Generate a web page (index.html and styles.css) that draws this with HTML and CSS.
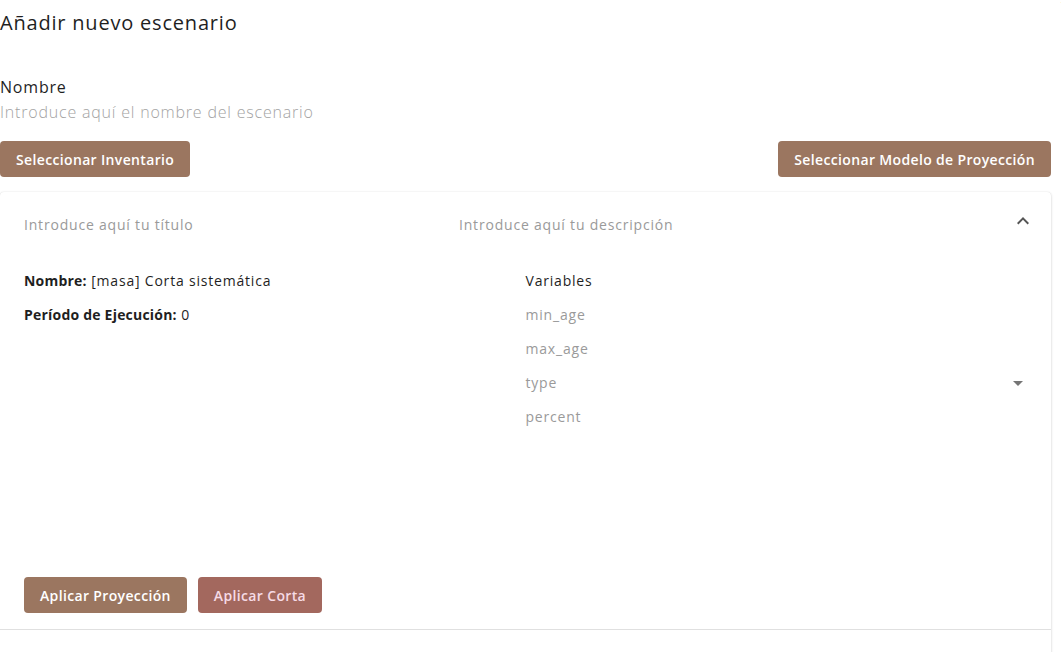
FILE: index.html
```html
<!DOCTYPE html>
<html lang="es">
<head>
<meta charset="utf-8">
<title>Añadir nuevo escenario</title>
<link rel="stylesheet" href="styles.css">
</head>
<body>
<div class="dialog">
  <span class="close">x</span>
  <h2 class="title">Añadir nuevo escenario</h2>
  <div class="field">
    <label class="label">Nombre</label>
    <div class="input">Introduce aquí el nombre del escenario</div>
  </div>
  <div class="actions">
    <button class="btn">Seleccionar Inventario</button>
    <button class="btn">Seleccionar Modelo de Proyección</button>
  </div>
  <div class="card">
    <div class="summary">
      <div class="sum-title">Introduce aquí tu título</div>
      <div class="sum-desc">Introduce aquí tu descripción</div>
      <svg class="chev" width="24" height="24" viewBox="0 0 24 24"><path d="M7.41 15.41 12 10.83l4.59 4.58L18 14l-6-6-6 6z" fill="#555"/></svg>
    </div>
    <div class="details">
      <div class="col">
        <div class="row"><b>Nombre:</b> [masa] Corta sistemática</div>
        <div class="row"><b>Período de Ejecución:</b> 0</div>
      </div>
      <div class="col">
        <div class="row dark">Variables</div>
        <div class="row">min_age</div>
        <div class="row">max_age</div>
        <div class="row select">type<svg class="caret" width="24" height="24" viewBox="0 0 24 24"><path d="M7 10l5 5 5-5z" fill="#757575"/></svg></div>
        <div class="row">percent</div>
      </div>
    </div>
    <div class="card-actions">
      <button class="btn">Aplicar Proyección</button>
      <button class="btn btn-corta">Aplicar Corta</button>
    </div>
    <div class="divider"></div>
    <div class="rest"></div>
  </div>
</div>
</body>
</html>
```
FILE: styles.css
```css
html, body {
  margin: 0;
  padding: 0;
  background: #fff;
  overflow: hidden;
}
body {
  font-family: "Open Sans", "Liberation Sans", sans-serif;
  color: #1f1f1f;
  letter-spacing: 0.05em;
}
.dialog {
  position: relative;
  width: 1051px;
  padding-right: 10px;
}
.close {
  position: absolute;
  top: -12px;
  right: -8px;
  font-size: 14px;
  color: #222;
}
.title {
  margin: 0;
  padding-top: 9px;
  font-size: 20px;
  font-weight: 500;
  line-height: 28px;
  color: #1f1f1f;
}
.field {
  margin-top: 38px;
}
.label {
  display: block;
  font-size: 16px;
  line-height: 24px;
  color: #1f1f1f;
}
.input {
  font-size: 16px;
  line-height: 26px;
  font-weight: 300;
  color: #a3a3a3;
}
.actions {
  display: flex;
  justify-content: space-between;
  margin-top: 16px;
}
.btn {
  height: 36px;
  padding: 0 16px;
  border: none;
  border-radius: 4px;
  background: #9b7660;
  color: #fff;
  font-family: inherit;
  font-size: 14px;
  font-weight: 600;
  letter-spacing: 0.025em;
  cursor: pointer;
}
.btn-corta {
  background: #a3685e;
  color: #f6dbe6;
}
.card {
  margin-top: 15px;
  background: #fff;
  border-radius: 4px 4px 0 0;
  box-shadow: 0 1px 3px rgba(0,0,0,0.18), 0 0 1px rgba(0,0,0,0.12);
}
.summary {
  display: flex;
  align-items: center;
  height: 64px;
  padding: 0 16px 0 24px;
  font-size: 14px;
  color: #9a9a9a;
}
.sum-title {
  width: 435px;
}
.sum-desc {
  flex: 1;
}
.chev {
  display: block;
  margin-top: -6px;
}
.details {
  display: grid;
  grid-template-columns: 1fr 1fr;
  padding: 8px 24px 0;
}
.row {
  height: 34px;
  line-height: 34px;
  font-size: 14px;
  color: #9a9a9a;
}
.col:first-child .row {
  color: #1f1f1f;
}
.row b {
  font-weight: 700;
  letter-spacing: 0.015em;
}
.row.dark {
  color: #1f1f1f;
}
.select {
  display: flex;
  justify-content: space-between;
  align-items: center;
}
.caret {
  display: block;
  margin-right: -3px;
}
.card-actions {
  display: flex;
  gap: 11px;
  padding: 143px 24px 16px;
}
.divider {
  height: 1px;
  background: #e0e0e0;
}
.rest {
  height: 40px;
}
```
